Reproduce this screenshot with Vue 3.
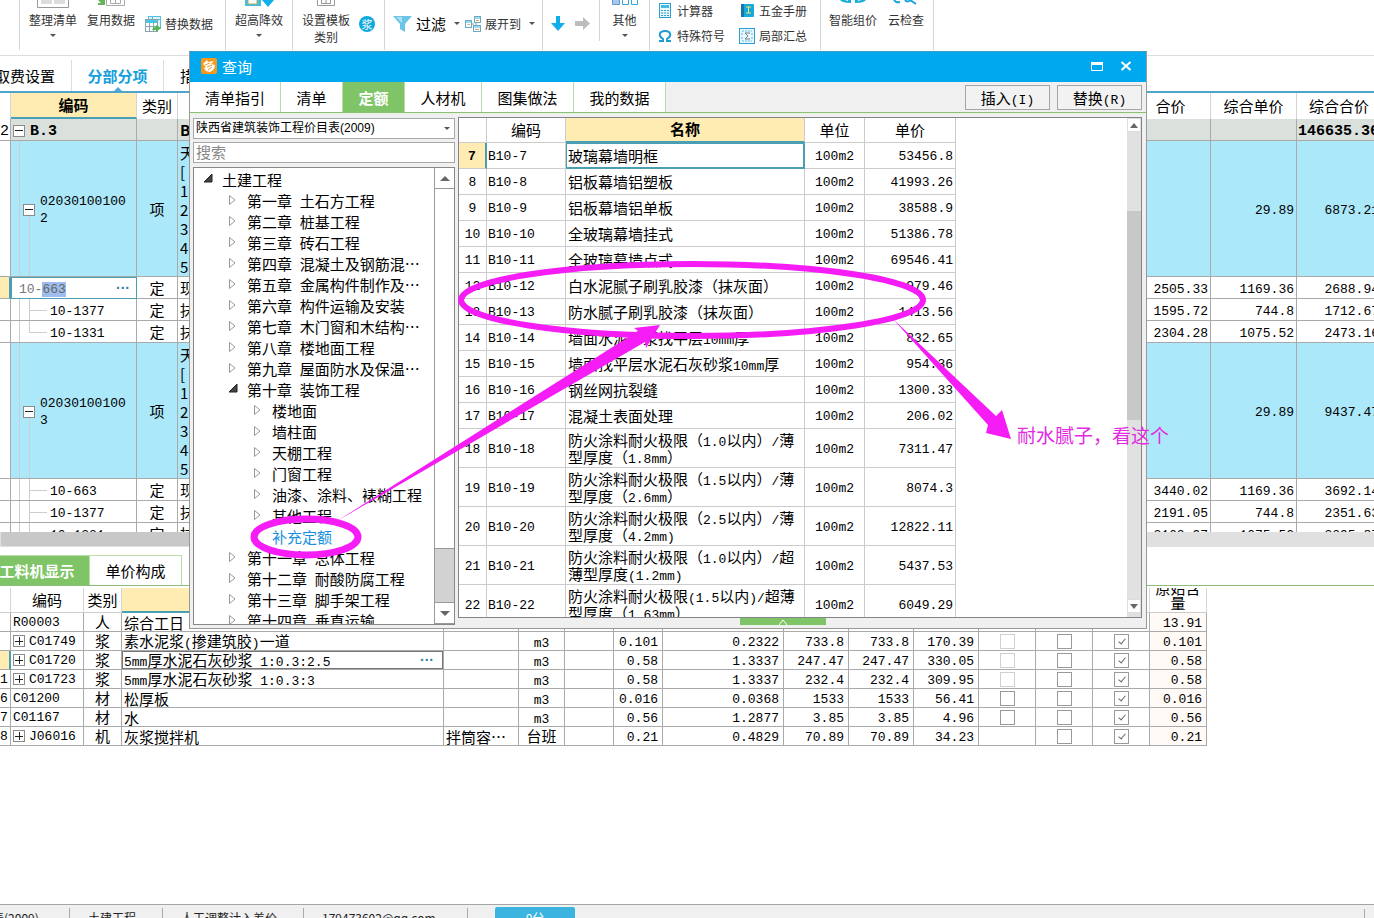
<script setup>
import { h, onMounted } from 'vue'

// Splits a label so that Latin runs are set in the narrow mono face.
const Mixed = ({ text }) =>
  h('span', { class: 'mixed' }, String(text).split(/([\x20-\x7e]+)/).filter(Boolean).map((part) =>
    /^[\x20-\x7e]/.test(part) ? h('span', { class: 'lat' }, part) : part))
Mixed.props = ['text']

let codeInput = null
const keepInput = (el) => { codeInput = el }
onMounted(() => {
  if (!codeInput) return
  codeInput.focus({ preventScroll: true })
  codeInput.setSelectionRange(3, 6)
})

const detail = ['天', '[', '1', '2', '3', '4', '5']
const bill = [
  { no: '2', kind: 'group', code: 'B.3', type: '', name: ['B'], a: '', b: '', c: '146635.36' },
  { kind: 'item', code: '020301001002', type: '项', name: detail, a: '', b: '29.89', c: '6873.21' },
  { kind: 'edit', code: '10-663', type: '定', name: ['现'], a: '2505.33', b: '1169.36', c: '2688.94' },
  { kind: 'sub', code: '10-1377', type: '定', name: ['抹'], a: '1595.72', b: '744.8', c: '1712.67' },
  { kind: 'sub last', code: '10-1331', type: '定', name: ['抹'], a: '2304.28', b: '1075.52', c: '2473.16' },
  { kind: 'item', code: '020301001003', type: '项', name: detail, a: '', b: '29.89', c: '9437.47' },
  { kind: 'sub', code: '10-663', type: '定', name: ['现'], a: '3440.02', b: '1169.36', c: '3692.14' },
  { kind: 'sub', code: '10-1377', type: '定', name: ['抹'], a: '2191.05', b: '744.8', c: '2351.63' },
  { kind: 'sub last', code: '10-1331', type: '定', name: ['抹'], a: '3163.97', b: '1075.52', c: '3395.87' }
]

const materials = [
  { no: '', code: 'R00003', type: '人', name: '综合工日', spec: '', unit: '', n: ['', '', '', '', '', ''], c: [null, null, null], o: '13.91' },
  { no: '', plus: true, code: 'C01749', type: '浆', name: '素水泥浆(掺建筑胶)一道', spec: '', unit: 'm3', n: ['', '0.101', '0.2322', '733.8', '733.8', '170.39'], c: [2, 0, 1], o: '0.101' },
  { no: '', plus: true, active: true, code: 'C01720', type: '浆', name: '5mm厚水泥石灰砂浆 1:0.3:2.5', spec: '', unit: 'm3', n: ['', '0.58', '1.3337', '247.47', '247.47', '330.05'], c: [2, 0, 1], o: '0.58' },
  { no: '1', plus: true, code: 'C01723', type: '浆', name: '5mm厚水泥石灰砂浆 1:0.3:3', spec: '', unit: 'm3', n: ['', '0.58', '1.3337', '232.4', '232.4', '309.95'], c: [2, 0, 1], o: '0.58' },
  { no: '6', code: 'C01200', type: '材', name: '松厚板', spec: '', unit: 'm3', n: ['', '0.016', '0.0368', '1533', '1533', '56.41'], c: [0, 0, 1], o: '0.016' },
  { no: '7', code: 'C01167', type: '材', name: '水', spec: '', unit: 'm3', n: ['', '0.56', '1.2877', '3.85', '3.85', '4.96'], c: [0, 0, 1], o: '0.56' },
  { no: '8', plus: true, code: 'J06016', type: '机', name: '灰浆搅拌机', spec: '拌筒容…', unit: '台班', n: ['', '0.21', '0.4829', '70.89', '70.89', '34.23'], c: [null, 0, 1], o: '0.21' }
]
const checkNames = ['暂估', '锁定', '计价']

const tree = [
  [0, 'open', '土建工程'],
  [1, 'shut', '第一章 土石方工程'],
  [1, 'shut', '第二章 桩基工程'],
  [1, 'shut', '第三章 砖石工程'],
  [1, 'shut', '第四章 混凝土及钢筋混…'],
  [1, 'shut', '第五章 金属构件制作及…'],
  [1, 'shut', '第六章 构件运输及安装'],
  [1, 'shut', '第七章 木门窗和木结构…'],
  [1, 'shut', '第八章 楼地面工程'],
  [1, 'shut', '第九章 屋面防水及保温…'],
  [1, 'open', '第十章 装饰工程'],
  [2, 'shut', '楼地面'],
  [2, 'shut', '墙柱面'],
  [2, 'shut', '天棚工程'],
  [2, 'shut', '门窗工程'],
  [2, 'shut', '油漆、涂料、裱糊工程'],
  [2, 'shut', '其他工程'],
  [2, 'leaf', '补充定额'],
  [1, 'shut', '第十一章 总体工程'],
  [1, 'shut', '第十二章 耐酸防腐工程'],
  [1, 'shut', '第十三章 脚手架工程'],
  [1, 'shut', '第十四章 垂直运输']
]

const quotas = [
  [7, ['玻璃幕墙明框'], '53456.8'],
  [8, ['铝板幕墙铝塑板'], '41993.26'],
  [9, ['铝板幕墙铝单板'], '38588.9'],
  [10, ['全玻璃幕墙挂式'], '51386.78'],
  [11, ['全玻璃幕墙点式'], '69546.41'],
  [12, ['白水泥腻子刷乳胶漆（抹灰面）'], '979.46'],
  [13, ['防水腻子刷乳胶漆（抹灰面）'], '1413.56'],
  [14, ['墙面水泥砂浆找平层10mm厚'], '832.65'],
  [15, ['墙面找平层水泥石灰砂浆10mm厚'], '954.36'],
  [16, ['钢丝网抗裂缝'], '1300.33'],
  [17, ['混凝土表面处理'], '206.02'],
  [18, ['防火涂料耐火极限（1.0以内）/薄', '型厚度（1.8mm）'], '7311.47'],
  [19, ['防火涂料耐火极限（1.5以内）/薄', '型厚度（2.6mm）'], '8074.3'],
  [20, ['防火涂料耐火极限（2.5以内）/薄', '型厚度（4.2mm)'], '12822.11'],
  [21, ['防火涂料耐火极限（1.0以内）/超', '薄型厚度(1.2mm)'], '5437.53'],
  [22, ['防火涂料耐火极限(1.5以内)/超薄', '型厚度（1.63mm）'], '6049.29']
]
const dialogTabs = ['清单指引', '清单', '定额', '人材机', '图集做法', '我的数据']
</script>

<template>
  <div class="page">
    <header class="toolbar">
      <div class="group g0"></div>
      <div class="group g1">
        <button class="tool">
          <svg class="cut" width="32" height="8"><path d="M.5 0V7.5H31.5V0" fill="#fff" stroke="#999" /><path d="M4 0H15V4H4ZM17 0H28V4H17Z" fill="#ddd" /></svg>
          <span>整理清单</span><i class="drop"></i>
        </button>
        <button class="tool">
          <svg class="cut" width="30" height="8"><path d="M2 0 5 3H2V5H9V0Z" fill="#64b55a" /><path d="M10.500 0V5.500H28.500V0M14.500 0V3.500H24.500V0M19.500 0V3" fill="none" stroke="#aaa" /></svg>
          <span>复用数据</span>
        </button>
        <button class="tool side">
          <svg width="16" height="16" viewBox="0 0 16 16"><rect x="3.500" y=".5" width="12" height="12" fill="#dff3fb" stroke="#55bfe0" /><path d="M3 3.500H16M7.500 1V12" stroke="#55bfe0" /><rect x=".5" y="3.500" width="12" height="12" fill="#fff" stroke="#8aa3ad" /><rect x="1" y="4" width="11" height="3" fill="#49c6e5" /><path d="M1 10.500H12M4.500 7V15M8.500 7V15" stroke="#8aa3ad" /><path d="M7 14Q8 11 11 11V9L16 12 11 16V14Z" fill="#52b752" /></svg>
          <span>替换数据</span>
        </button>
      </div>
      <div class="group g2">
        <button class="tool">
          <svg class="cut" width="30" height="8"><path d="M1 0H17V6H1Z" fill="#45bede" /><path d="M4 0V4H13V0" fill="#fff" stroke="#bba65a" /><path d="M18 0H30L24 7Z" fill="#10aee8" /></svg>
          <span>超高降效</span><i class="drop"></i>
        </button>
      </div>
      <div class="group g3">
        <button class="tool">
          <svg class="cut" width="18" height="8"><path d="M.5 0V5.500H17.500V0M4.500 0V3.500H13.500V0M9 0V3" fill="none" stroke="#999" /></svg>
          <span>设置模板<br>类别</span>
        </button>
        <button class="badge">浆</button>
      </div>
      <div class="group g4">
        <button class="tool side big">
          <svg width="19" height="16" viewBox="0 0 19 16"><path d="M0 0H19L12 8V16L7 13V8Z" fill="#6cc4e6" /><path d="M3 1H9V7Z" fill="#a9e0f4" /></svg>
          <span>过滤</span><i class="drop"></i>
        </button>
        <button class="tool side">
          <svg width="16" height="16" viewBox="0 0 16 16" fill="#fff" stroke="#6ba8c4"><path d="M6 8H9M11 4V12" /><rect x=".5" y="4.500" width="6" height="7" /><rect x="9.500" y=".5" width="6" height="6" /><rect x="8.500" y="9.500" width="7" height="6" /><path d="M1 6H6M10 2H15M9 11H15" stroke="#40b6dc" /><path d="M2.500 8.500H5M11 4.500H14M10 13.500H14" stroke="#e7a35c" /></svg>
          <span>展开到</span><i class="drop"></i>
        </button>
      </div>
      <div class="group g5">
        <button class="plain" aria-label="下移"><svg width="14" height="15"><path d="M5 0H9V7H14L7 15 0 7H5Z" fill="#10aee8" /></svg></button>
        <button class="plain" aria-label="右移"><svg width="15" height="15"><path d="M0 5H8V1L15 7.500 8 14V10H0Z" fill="#bdbdbd" /></svg></button>
      </div>
      <div class="group g6">
        <button class="tool">
          <svg class="cut" width="26" height="8"><path d="M.5 0V4.500H7.500V0" fill="#a8c8ee" stroke="#5f98cc" /><path d="M10.500 0V4.500H16.500V0M19.500 0V4.500H25.500V0" fill="#fff" stroke="#36a9d8" /></svg>
          <span>其他</span><i class="drop"></i>
        </button>
      </div>
      <div class="group g7">
        <button class="tool side">
          <svg width="16" height="16" viewBox="0 0 16 16"><rect x="2.500" y=".5" width="11" height="14" fill="#eef9fd" stroke="#2b9fd2" /><rect x="4" y="2" width="8" height="3" fill="#45b9e4" /><path d="M4 7.500H12M4 10H12M4 12.500H12" stroke="#2b9fd2" stroke-dasharray="2 1" /></svg>
          <span>计算器</span>
        </button>
        <button class="tool side">
          <svg width="16" height="16" viewBox="0 0 16 16"><rect x="2" y="1" width="13" height="13" rx="1" fill="#18a9dc" /><rect x="2" y="1" width="3" height="13" fill="#1678a9" /><path d="M7 4H12M9.500 4V10M7 10H12" stroke="#f5e663" /></svg>
          <span>五金手册</span>
        </button>
        <button class="tool side">
          <svg width="16" height="16" viewBox="0 0 16 16"><path d="M2 13H6V11C1 8 2 3 8 3S15 8 10 11V13H14" fill="none" stroke="#1e9bd2" stroke-width="2" /></svg>
          <span>特殊符号</span>
        </button>
        <button class="tool side">
          <svg width="16" height="16" viewBox="0 0 16 16"><rect x=".5" y=".5" width="15" height="15" fill="#e9f7fc" stroke="#2b9fd2" /><path d="M3 3H13M3 13H13M2 6H4M2 10H4M12 6H14M12 10H14" stroke="#58bce0" stroke-dasharray="2 1" /><path d="M11 5H6L9 8 6 11H11" fill="none" stroke="#6c7f88" /></svg>
          <span>局部汇总</span>
        </button>
      </div>
      <div class="group g8">
        <button class="tool">
          <svg class="cut" width="28" height="8"><path d="M1 0Q3 3 12 3V0H9V1L6 0ZM27 0Q25 3 16 3V0H19V1L22 0Z" fill="#18b0dc" /></svg>
          <span>智能组价</span>
        </button>
        <button class="tool">
          <svg class="cut" width="28" height="8"><path d="M2 0Q4 3 8 2M13 0Q15 3 19 0M18 0 24 4" fill="none" stroke="#18a4dc" stroke-width="2" /></svg>
          <span>云检查</span>
        </button>
      </div>
    </header>

    <nav class="main-tabs">
      <button class="mt1">取费设置</button>
      <button class="mt2 on">分部分项</button>
      <button class="mt3">措施项目</button>
    </nav>

    <section class="bill">
      <table>
        <colgroup><col class="w11"><col class="w126"><col class="w41"><col><col class="w80"><col class="w86"><col class="w85"></colgroup>
        <thead>
          <tr><th></th><th class="hot">编码</th><th>类别</th><th></th><th>合价</th><th>综合单价</th><th>综合合价</th></tr>
        </thead>
        <tbody>
          <tr v-for="(r, i) in bill" :key="i" :class="r.kind">
            <td class="idx">{{ r.no }}</td>
            <td class="code">
              <div v-if="r.kind === 'edit'" class="editor">
                <input :ref="keepInput" :value="r.code" aria-label="编码"><button class="dots" aria-label="选择">···</button>
              </div>
              <div v-else class="code-in">
                <button v-if="r.kind === 'group' || r.kind === 'item'" class="fold" aria-label="折叠"></button>
                <span>{{ r.code }}</span>
              </div>
            </td>
            <td class="mid">{{ r.type }}</td>
            <td class="names"><div v-for="(n, k) in r.name" :key="k">{{ n }}</div></td>
            <td class="num">{{ r.a }}</td><td class="num">{{ r.b }}</td><td class="num">{{ r.c }}</td>
          </tr>
        </tbody>
      </table>
    </section>
    <div class="hscroll"><div></div></div>

    <nav class="sub-tabs"><button class="on">工料机显示</button><button>单价构成</button></nav>

    <section class="materials">
      <table>
        <colgroup>
          <col class="w11"><col class="w73"><col class="w38"><col class="w322"><col class="w75"><col class="w46"><col class="w49"><col class="w49"><col class="w121">
          <col class="w65"><col class="w65"><col class="w65"><col class="w57"><col class="w57"><col class="w57"><col class="w57">
        </colgroup>
        <thead>
          <tr><th></th><th>编码</th><th>类别</th><th class="hot"></th><th v-for="k in 11" :key="k"></th><th><div class="two">原始含<br>量</div></th></tr>
        </thead>
        <tbody>
          <tr v-for="(m, i) in materials" :key="i" :class="{ active: m.active }">
            <td class="idx">{{ m.no }}</td>
            <td class="mcode"><div><button v-if="m.plus" class="fold plus" aria-label="展开"></button><span>{{ m.code }}</span></div></td>
            <td class="mid">{{ m.type }}</td>
            <td class="mname"><div><Mixed :text="m.name" /><button v-if="m.active" class="dots" aria-label="选择">···</button></div></td>
            <td class="spec">{{ m.spec }}</td>
            <td class="mid"><Mixed :text="m.unit" /></td>
            <td v-for="(n, k) in m.n" :key="k" class="num">{{ n }}</td>
            <td v-for="(c, k) in m.c" :key="'c' + k" class="tick">
              <input v-if="c !== null" type="checkbox" :checked="c === 1" :disabled="c === 2" :aria-label="checkNames[k]">
            </td>
            <td class="num origin">{{ m.o }}</td>
          </tr>
        </tbody>
      </table>
    </section>

    <footer class="status">
      <span class="s1">表(2009)</span><span class="s2">土建工程</span><span class="s3">人工调整计入差价</span><span class="s4">179473602@qq.com</span>
      <button>0分</button><i></i>
    </footer>

    <div class="dialog" role="dialog" aria-label="查询">
      <div class="title">
        <svg width="16" height="16" viewBox="0 0 16 16"><rect width="16" height="16" rx="2" fill="#f6981d" /><path d="M2 6 6 2 7 4 13 3 10 6 14 7Q14 12 9 14L5 13 3 10 5 9Z" fill="#fff" /><path d="M4 7 9 5M6 9 11 7M7 12 11 9" stroke="#f6981d" /></svg>
        <h1>查询</h1>
        <button aria-label="最大化"><svg width="12" height="9"><path d="M.5 .5H11.500V8.500H.5Z" fill="none" stroke="#fff" /><path d="M0 0H12V3H0Z" fill="#fff" /></svg></button>
        <button aria-label="关闭"><svg width="12" height="10"><path d="M1.500 1 10.500 9M10.500 1 1.500 9" stroke="#fff" stroke-width="2" /></svg></button>
      </div>
      <div class="dtabs">
        <button v-for="(t, i) in dialogTabs" :key="t" class="dtab" :class="['t' + i, { on: i === 2 }]">{{ t }}</button>
        <div class="acts"><button><Mixed text="插入(I)" /></button><button><Mixed text="替换(R)" /></button></div>
      </div>
      <div class="dbody">
        <div class="left">
          <div class="pick"><select aria-label="定额库"><option>陕西省建筑装饰工程价目表(2009)</option></select><i class="drop"></i></div>
          <input class="search" type="text" placeholder="搜索" aria-label="搜索">
          <div class="treebox">
            <ul>
              <li v-for="t in tree" :key="t[2]" :class="['d' + t[0], t[1]]">
                <svg width="10" height="12" viewBox="0 0 10 12"><path v-if="t[1] === 'open'" d="M9 1V9H1Z" fill="#444" stroke="#222" /><path v-else-if="t[1] === 'shut'" d="M1.500 1.500V10.500L7 6Z" fill="#fff" stroke="#999" /></svg>
                <Mixed :text="t[2]" />
              </li>
            </ul>
            <div class="vbar">
              <button aria-label="向上"><i class="up"></i></button><div class="thumb"></div><div class="rest"></div><button aria-label="向下"><i class="down"></i></button>
            </div>
          </div>
        </div>
        <div class="right">
          <div class="grid">
            <table>
              <colgroup><col class="w28"><col class="w79"><col class="w239"><col class="w60"><col class="w91"></colgroup>
              <thead><tr><th></th><th>编码</th><th class="hot">名称</th><th>单位</th><th>单价</th></tr></thead>
              <tbody>
                <tr v-for="q in quotas" :key="q[0]" :class="{ sel: q[0] === 7, tall: q[1].length > 1 }">
                  <td class="qn">{{ q[0] }}</td><td class="qc">B10-{{ q[0] }}</td>
                  <td class="qt"><div v-for="l in q[1]" :key="l"><Mixed :text="l" /></div></td>
                  <td class="qu">100m2</td><td class="num">{{ q[2] }}</td>
                </tr>
              </tbody>
            </table>
            <div class="vbar slim">
              <button aria-label="向上"><i class="up"></i></button><div class="gap"></div><div class="thumb"></div><div class="rest"></div><button aria-label="向下"><i class="down"></i></button>
            </div>
          </div>
          <button class="pull" aria-label="展开"><svg width="10" height="6"><path d="M1 6 5 1 9 6" fill="none" stroke="#fff" /></svg></button>
        </div>
      </div>
    </div>

    <svg class="marks" width="1374" height="918" viewBox="0 0 1374 918">
      <g fill="none" stroke="#f51cf5">
        <ellipse cx="692" cy="300" rx="231" ry="36" stroke-width="6" />
        <ellipse cx="306" cy="537" rx="52" ry="18" stroke-width="7" />
      </g>
      <g fill="#f51cf5">
        <path d="M337 521 638 331 634 328 660 325 646 348 645 342Z" />
        <path d="M893 319 996 416 1002 410 1011 439 986 433 988 425Z" />
      </g>
    </svg>
    <p class="note">耐水腻子，看这个</p>
  </div>
</template>

<style>
body { margin: 0; overflow: hidden; }
.lat { font-family: "Liberation Mono", monospace; font-size: 13px; line-height: 10px; white-space: pre; }
</style>

<style scoped>
* { box-sizing: border-box; }
.page { position: relative; display: flex; flex-direction: column; height: 100vh; overflow: hidden; background: #fff; color: #000; font: 15px/17px "Noto Sans CJK SC", sans-serif; }
button { margin: 0; padding: 0; border: 0; border-radius: 0; background: none; color: inherit; font: inherit; white-space: nowrap; }
table { border-collapse: separate; border-spacing: 0; table-layout: fixed; }
th { padding: 0 0 2px; font-weight: 400; }
td { padding: 0; }
.drop { display: block; width: 0; height: 0; border: 3px solid transparent; border-top-color: #555; border-bottom: 0; }
.up, .down { display: block; width: 0; height: 0; border: 5px solid transparent; }
.up { border-top: 0; border-bottom-color: #666; }
.down { border-bottom: 0; border-top-color: #666; }

.toolbar { flex: none; display: flex; height: 56px; padding-bottom: 5px; border-bottom: 1px solid #ddd; font-size: 12px; line-height: 17px; color: #333; overflow: hidden; }
.group { flex: none; display: flex; align-items: flex-start; border-right: 1px solid #d5d5d5; }
.tool { display: flex; flex-direction: column; align-items: center; }
.tool .cut { margin-bottom: 3px; }
.tool .drop { margin-top: 6px; }
.tool.side { flex-direction: row; gap: 4px; }
.tool.side .drop { margin: 0 0 0 4px; }
.g0 { width: 20px; }
.g1 { width: 206px; padding-left: 9px; gap: 10px; }
.g1 .side, .g4 .side { margin-top: 15px; }
.g2 { width: 67px; padding-left: 9px; }
.g3 { width: 92px; padding-left: 9px; gap: 9px; }
.badge { width: 16px; height: 16px; margin-top: 16px; border-radius: 8px; background: #10a9de; color: #fff; font-size: 11px; line-height: 16px; }
.g4 { width: 158px; padding-left: 8px; gap: 5px; }
.g4 .big { font-size: 15px; color: #000; }
.g5 { width: 57px; padding: 16px 0 0 8px; gap: 10px; height: 41px; }
.g6 { width: 50px; justify-content: center; }
.g7 { width: 171px; padding: 2px 0 0 7px; display: grid; grid-template-columns: 82px 80px; grid-auto-rows: 25px; }
.g8 { width: 113px; padding-left: 8px; gap: 11px; }

.main-tabs { flex: none; display: flex; height: 37px; padding-top: 4px; border-bottom: 2px solid #4ea5c9; }
.main-tabs button { height: 31px; border-right: 1px solid #ddd; }
.mt1 { width: 77px; margin-left: -5px !important; text-align: left; }
.mt2 { position: relative; width: 92px; color: #14a0dc; font-weight: 700 !important; }
.mt2::after { content: ""; position: absolute; left: 42px; bottom: 0; border: 4px solid transparent; border-top: 0; border-bottom-color: #4ea5e0; }
.mt3 { padding-left: 16px !important; }

.w11 { width: 11px; } .w126 { width: 126px; } .w41 { width: 41px; } .w80 { width: 80px; } .w86 { width: 86px; } .w85 { width: 85px; }
.w73 { width: 73px; } .w38 { width: 38px; } .w322 { width: 322px; } .w75 { width: 75px; } .w46 { width: 46px; } .w49 { width: 49px; }
.w121 { width: 121px; } .w65 { width: 65px; } .w57 { width: 57px; }
.w28 { width: 28px; } .w79 { width: 79px; } .w239 { width: 239px; } .w60 { width: 60px; } .w91 { width: 91px; }

.bill { flex: none; height: 439px; overflow: hidden; }
.bill table { width: calc(100% + 8px); }
.bill th { height: 26px; border-right: 1px solid #d5d5d5; }
.bill td { height: 22px; border-right: 1px solid #aaa; border-bottom: 1px solid #aaa; }
.hot { background: #ffecb3; border-bottom: 2px solid #4a9fb5; font-weight: 700; }
.num, .idx, .code, .mcode, .qn, .qc, .qu { font-family: "Liberation Mono", monospace; font-size: 13px; }
.num { padding: 2px 2px 0 0; text-align: right; }
.bill .num, .bill .code, .bill .idx { padding-top: 3px; }
.bill .edit .code { padding-top: 0; }
.idx { padding-right: 5px; text-align: right; }
.mid { padding-bottom: 1px; text-align: center; }
tr.group { display: table-row; background: #dae1dc; font-weight: 700; }
tr.group .idx { background: #fff; font-weight: 400; font-size: 15px; }
tr.group .code, tr.group .num { font-size: 15px; }
tr.item { background: #abe8fa; }
tr.item td { height: 136px; }
tr.item .idx { background: #fff; }
.code { background-image: linear-gradient(#c9ced0, #c9ced0), linear-gradient(#c9ced0, #c9ced0), linear-gradient(#c9ced0, #c9ced0); background-repeat: no-repeat; background-size: 1px 100%, 1px 100%, 17px 1px; background-position: 8px 0, 18px 0, 19px 11px; }
tr.item .code { background-size: 1px 100%, 1px 50%, 0 0; background-position: 8px 0, 18px 100%, 0 0; }
tr.last .code { background-size: 1px 100%, 1px 12px, 17px 1px; }
tr.group .code { background-image: none; }
.code-in { display: flex; align-items: center; }
.item .code-in { padding: 0 6px 0 12px; gap: 5px; word-break: break-all; }
tr.group .code-in { padding-left: 2px; gap: 5px; }
.sub .code-in { padding-left: 39px; }
.fold { position: relative; flex: none; width: 12px; height: 12px; border: 1px solid #8b8b8b; background: #fff; }
.fold::before, .plus::after { content: ""; position: absolute; left: 1px; right: 1px; top: 4px; height: 1px; background: #222; }
.plus::after { left: 5px; right: auto; top: 1px; width: 1px; height: 8px; }
.plus::before { top: 5px; }
.bill .names { padding: 2px 0 0 2px; line-height: 19px; font-size: 15px; overflow: hidden; }
tr.sub .names, tr.edit .names, tr.group .names { padding-top: 0; }
tr.edit .idx { background: #ffecb3; border-right: 2px solid #4a9fb5; }
tr.edit .code { background: #fff; border: 1px solid #4a9fb5; }
.editor { display: flex; align-items: center; height: 19px; }
.editor input { flex: 1; width: 0; min-width: 0; height: 19px; padding: 3px 0 0 7px; border: 0; outline: 0; background: none; color: #777; font: 13px/16px "Liberation Mono", monospace; caret-color: transparent; }
.editor input::selection { background: #9dbdee; color: #666; }
.dots { color: #2f7fa8; font: 700 14px/14px "Liberation Sans", sans-serif; }
.editor .dots { margin-right: 6px; }
.hscroll { flex: none; height: 15px; background: #e0e0e0; }
.hscroll div { width: 60%; height: 14px; margin-left: 1px; border-radius: 2px; background: #c8c8c8; }

.sub-tabs { flex: none; display: flex; height: 39px; padding-top: 8px; border-bottom: 1px solid #8cc07a; }
.sub-tabs button { width: 92px; border: 1px solid #b9deaa; border-width: 1px 1px 0 0; }
.sub-tabs .on { width: 90px; background: #7fc466; color: #fff; font-weight: 700; text-indent: -15px; }

.materials { flex: 1; min-height: 0; overflow: hidden; padding-top: 2px; }
.materials table { width: 1207px; }
.materials th { height: 25px; border-right: 1px solid #d5d5d5; border-bottom: 1px solid #ccc; }
.materials th.hot { border-bottom: 2px solid #4a9fb5; }
.two { height: 22px; overflow: hidden; display: flex; flex-direction: column; justify-content: flex-end; line-height: 15px; }
.materials td { height: 19px; border-right: 1px solid #aaa; border-bottom: 1px solid #aaa; line-height: 15px; }
.materials .num { padding-top: 2px; padding-right: 4px; }
.mcode div { display: flex; align-items: center; gap: 4px; padding-left: 2px; }
.mname { padding-left: 2px; }
.mname div { display: flex; align-items: center; justify-content: space-between; height: 16px; }
.mname .dots { margin-right: 9px; }
.spec { padding-left: 2px; white-space: nowrap; }
.active .idx { background: #ffecb3; border-right: 2px solid #4a9fb5; }
.active .mname { box-shadow: inset 0 0 0 1px #777; }
.tick { text-align: center; }
.tick input { position: relative; display: block; appearance: none; width: 15px; height: 15px; margin: 0 auto; border: 1px solid #999; background: #fff; }
.tick input:disabled { border-color: #d0d0d0; }
.tick input:checked::after { content: ""; position: absolute; left: 5px; top: 2px; width: 3px; height: 6px; border: solid #666; border-width: 0 1px 1px 0; transform: rotate(40deg); }
.origin { background: #fffaf5; }

.status { flex: none; display: flex; height: 14px; border-top: 1px solid #a5a5a5; background: #f0f0f0; font-size: 12px; overflow: hidden; color: #222; }
.status span { flex: none; height: 24px; margin-top: 3px; padding-left: 18px; border-right: 1px solid #aaa; line-height: 20px; white-space: nowrap; }
.status .s1 { width: 78px; margin-left: -8px; padding-left: 0; }
.s2 { width: 93px; } .s3 { width: 141px; } .s4 { width: 164px; }
.status button { flex: none; width: 80px; height: 22px; margin: 2px 0 0 27px; border-radius: 2px; background: #3bb4e0; color: #fff; line-height: 20px; }
.status i { margin: 4px 9px 0 auto; width: 1px; height: 20px; background: #aaa; }

.dialog { position: absolute; left: 189px; right: 227px; top: 51px; height: calc(100vh - 340px); display: flex; flex-direction: column; border: 1px solid #999; border-top-color: #3e9cc4; background: #f0f0f0; }
.title { flex: none; display: flex; align-items: center; height: 30px; padding: 0 14px 2px 11px; background: #00a8f0; color: #fff; }
.title h1 { flex: 1; margin: 0 0 0 5px; font-size: 15px; font-weight: 400; line-height: 17px; }
.title button { display: flex; margin-left: 17px; }
.dtabs { flex: none; display: flex; height: 31px; border-bottom: 1px solid #8cc07a; }
.dtab { border-right: 1px solid #b9deaa; background: #fff; }
.dtab.on { background: #7fc466; color: #fff; font-weight: 700; }
.t0 { width: 91px; } .t1 { width: 62px; } .t2 { width: 62px; } .t3 { width: 77px; } .t4 { width: 92px; } .t5 { width: 92px; }
.acts { display: flex; gap: 7px; margin-left: auto; padding: 3px 4px 2px 0; }
.acts button { width: 85px; border: 1px solid #a5a5a5; background: #f2f2f2; }
.dbody { flex: 1; min-height: 0; display: flex; gap: 3px; padding: 3px 4px 3px 3px; border-top: 1px solid #e6f3df; }
.left { flex: none; display: flex; flex-direction: column; gap: 4px; width: 262px; }
.pick { position: relative; height: 21px; }
.pick select { appearance: none; width: 100%; height: 21px; padding: 0 2px; border: 1px solid #a8a8a8; border-radius: 0; background: #fff; color: #000; font: 12px/17px "Liberation Sans", "Noto Sans CJK SC", sans-serif; }
.pick .drop { position: absolute; right: 5px; top: 10px; }
.search { height: 21px; padding: 0 2px 2px; border: 1px solid #a8a8a8; outline: 0; border-radius: 0; font: 15px/17px "Noto Sans CJK SC", sans-serif; }
.search::placeholder { color: #888; }
.treebox { flex: 1; min-height: 0; display: flex; border: 1px solid #888; background: #fff; overflow: hidden; }
.treebox ul { flex: 1; min-width: 0; margin: 0; padding: 2px 0 0; list-style: none; overflow: hidden; }
.treebox li { display: flex; align-items: flex-start; gap: 9px; height: 21px; line-height: 19px; white-space: nowrap; }
.treebox li svg { flex: none; margin-top: 3px; }
.d0 { padding-left: 9px; } .d1 { padding-left: 34px; } .d2 { padding-left: 59px; }
.leaf { color: #1590e0; }
.vbar { flex: none; display: flex; flex-direction: column; width: 20px; border-left: 1px solid #999; background: #d2d2d2; }
.vbar button { flex: none; display: flex; align-items: center; justify-content: center; height: 21px; border-bottom: 1px solid #999; background: #fff; }
.vbar .thumb { flex: 362; background: #fff; border-bottom: 1px solid #999; }
.vbar .rest { flex: 53; border-bottom: 1px solid #999; }
.right { flex: 1; min-width: 0; display: flex; flex-direction: column; align-items: center; }
.grid { flex: 1; min-height: 0; width: 100%; display: flex; justify-content: space-between; border: 1px solid #85828c; background: #fff; overflow: hidden; }
.grid table { width: 497px; height: 0; align-self: flex-start; }
.grid th { height: 25px; border-right: 1px solid #ccc; border-bottom: 1px solid #ccc; }
.grid th.hot { border-bottom: 2px solid #4a9fb5; }
.grid td { height: 26px; border-right: 1px solid #ccc; border-bottom: 1px solid #ccc; }
.grid .tall td { height: 39px; }
.qn { text-align: center; }
.qc { padding-left: 1px; }
.qn, .qc, .qu { padding-top: 2px; }
.qt { padding: 0 0 1px 2px; white-space: nowrap; }
.qu { text-align: center; }
.sel .qn { background: #ffecb3; font-weight: 700; border-right: 2px solid #4a9fb5; }
.grid .sel .qt { box-shadow: inset 0 0 0 1px #4a9fb5; border-color: #4a9fb5; }
.slim { width: 14px; border-left: 0; background: #e1e1e1; padding-bottom: 4px; }
.slim button { height: 14px; border: 1px solid #ddd; }
.slim .gap { flex: 79; }
.slim .thumb { flex: 209; background: #c8c8c8; border: 0; }
.slim .rest { flex: 179; border: 0; }
.slim .up, .slim .down { border-left-width: 4px; border-right-width: 4px; }
.pull { flex: none; display: flex; align-items: center; justify-content: center; width: 86px; height: 7px; background: #7fc466; margin-left: -34px; }

.marks { position: absolute; left: 0; top: 0; pointer-events: none; }
.note { position: absolute; left: 1017px; top: 423px; margin: 0; color: #e22be2; font-size: 19px; line-height: 24px; white-space: nowrap; }
</style>
